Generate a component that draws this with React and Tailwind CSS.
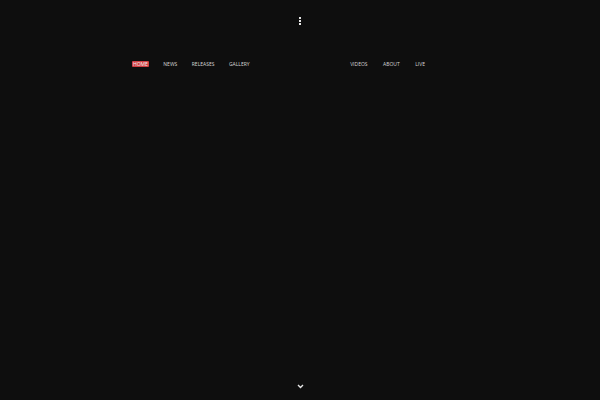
import React from "react";

export default function App() {
  const left = ["NEWS", "RELEASES", "GALLERY"];
  const right = ["VIDEOS", "ABOUT", "LIVE"];
  return (
    <div className="w-[600px] h-[400px] bg-[#0e0e0e] flex flex-col overflow-hidden" style={{ fontFamily: '"Open Sans", "DejaVu Sans", sans-serif' }}>
      <div className="flex justify-center pt-[17px]">
        <div className="flex flex-col gap-[1px]">
          <span className="block w-[2px] h-[2px] bg-[#e6e6e6]" />
          <span className="block w-[2px] h-[2px] bg-[#e6e6e6]" />
          <span className="block w-[2px] h-[2px] bg-[#e6e6e6]" />
        </div>
      </div>
      <nav className="mt-[36px] ml-[132px] w-[293px] flex justify-between items-center text-[5px] leading-[6px] text-[#d6d6d6]">
        <div className="flex items-center gap-[14.5px]">
          <span className="bg-[#cf3f43] text-[#f4f4f4] px-[1px] rounded-[1px]">HOME</span>
          {left.map((t) => (
            <span key={t}>{t}</span>
          ))}
        </div>
        <div className="flex items-center gap-[15.5px]">
          {right.map((t) => (
            <span key={t}>{t}</span>
          ))}
        </div>
      </nav>
      <div className="flex-1" />
      <div className="flex justify-center pb-[11px]">
        <svg width="7" height="5" viewBox="0 0 7 5" fill="none">
          <path d="M1 1 L3.5 3.5 L6 1" stroke="#e6e6e6" strokeWidth="1.4" />
        </svg>
      </div>
    </div>
  );
}
